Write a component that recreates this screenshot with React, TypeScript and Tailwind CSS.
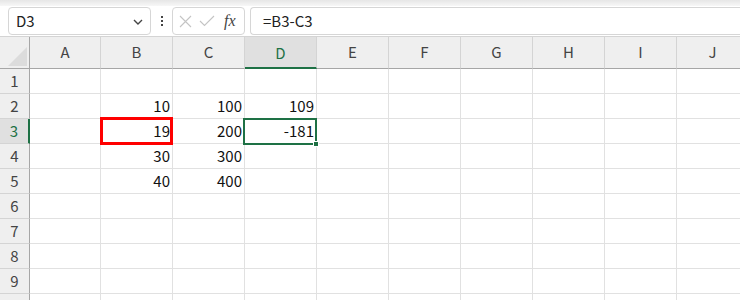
import React from "react";

const cols = ["A", "B", "C", "D", "E", "F", "G", "H", "I", "J"];
const rows = [1, 2, 3, 4, 5, 6, 7, 8, 9, 10];

const data: Record<string, string> = {
  B2: "10",
  C2: "100",
  D2: "109",
  B3: "19",
  C3: "200",
  D3: "-181",
  B4: "30",
  C4: "300",
  B5: "40",
  C5: "400",
};

const font = { fontFamily: '"Noto Sans CJK JP", "Noto Sans", sans-serif' };

const Toolbar = () => (
  <div className="relative h-[37px] border-b border-[#d4d4d4] bg-white">
    <div className="h-[6px] bg-gradient-to-b from-[#e6e6e6] to-[#f7f7f7]" />
    <div className="flex h-[29px] items-stretch pl-[8px] pt-px">
      <div className="flex w-[143px] items-center justify-between rounded-[4px] border border-[#d6d6d6] pl-[7px] pr-[6px]">
        <span className="text-[15px] text-[#222]">D3</span>
        <svg width="12" height="8" viewBox="0 0 12 8" className="mt-px">
          <path d="M2 2 L6 6 L10 2" fill="none" stroke="#444" strokeWidth="1.4" />
        </svg>
      </div>
      <div className="flex w-[21px] items-center justify-center">
        <svg width="4" height="12" viewBox="0 0 4 12">
          <rect x="1" y="1" width="2" height="2" fill="#444" />
          <rect x="1" y="5" width="2" height="2" fill="#444" />
          <rect x="1" y="9" width="2" height="2" fill="#444" />
        </svg>
      </div>
      <div className="flex w-[73px] items-center gap-[7px] rounded-[4px] border border-[#d6d6d6] pl-[6px]">
        <svg width="13" height="13" viewBox="0 0 13 13">
          <path d="M1 1 L12 12 M12 1 L1 12" stroke="#c4c4c4" strokeWidth="1.1" />
        </svg>
        <svg width="16" height="12" viewBox="0 0 16 12">
          <path d="M1 6 L5.5 10.5 L15 1" fill="none" stroke="#c4c4c4" strokeWidth="1.1" />
        </svg>
        <span
          className="ml-[2px] text-[16px] italic leading-none text-[#444]"
          style={{ fontFamily: '"Liberation Serif", serif' }}
        >
          fx
        </span>
      </div>
      <div className="ml-[5px] flex flex-1 items-center rounded-l-[4px] border border-r-0 border-[#d6d6d6] pl-[12px]">
        <span className="text-[15px] text-[#222]">=B3-C3</span>
      </div>
    </div>
  </div>
);

const Grid = () => (
  <div className="relative grid grid-cols-[30px_71px_repeat(9,72px)]">
    <div className="relative h-[32px] border-b border-r border-[#a6a6a6] bg-[#efefef]">
      <svg width="20" height="20" viewBox="0 0 20 20" className="absolute left-[8px] top-[10px]">
        <path d="M19 0 L19 19 L0 19 Z" fill="#dcdcdc" />
      </svg>
    </div>
    {cols.map((c) => (
      <div
        key={c}
        className={
          c === "D"
            ? "flex h-[32px] items-center justify-center border-b-2 border-r border-b-[#1e7145] border-r-[#d4d4d4] bg-[#e0e0e0] pt-[2px] text-[15px] text-[#1e7145]"
            : "flex h-[32px] items-center justify-center border-b border-r border-b-[#a6a6a6] border-r-[#d4d4d4] bg-[#efefef] text-[15px] text-[#444]"
        }
      >
        {c}
      </div>
    ))}
    {rows.map((r) => (
      <React.Fragment key={r}>
        <div
          className={
            r === 3
              ? "flex h-[25px] items-center justify-center border-b border-r-2 border-b-[#d4d4d4] border-r-[#1e7145] bg-[#e0e0e0] text-[15px] text-[#1e7145]"
              : "flex h-[25px] items-center justify-center border-b border-r border-b-[#d4d4d4] border-r-[#a6a6a6] bg-[#efefef] text-[15px] text-[#444]"
          }
        >
          {r < 10 ? r : ""}
        </div>
        {cols.map((c) => (
          <div
            key={c}
            className="flex h-[25px] items-center justify-end border-b border-r border-[#e1e1e1] pr-[2px] text-[15px] text-[#111]"
          >
            {data[c + r] ?? ""}
          </div>
        ))}
      </React.Fragment>
    ))}
    <div className="pointer-events-none absolute left-[100px] top-[80px] h-[28px] w-[73px] border-[3px] border-[#ff0000]" />
    <div className="pointer-events-none absolute left-[243px] top-[81px] h-[27px] w-[74px] border-2 border-[#1e7145]" />
    <div className="pointer-events-none absolute left-[313px] top-[104px] h-[6px] w-[6px] border border-white bg-[#1e7145]" />
  </div>
);

export default function App() {
  return (
    <div className="h-[300px] w-[740px] overflow-hidden bg-white" style={font}>
      <Toolbar />
      <Grid />
    </div>
  );
}
